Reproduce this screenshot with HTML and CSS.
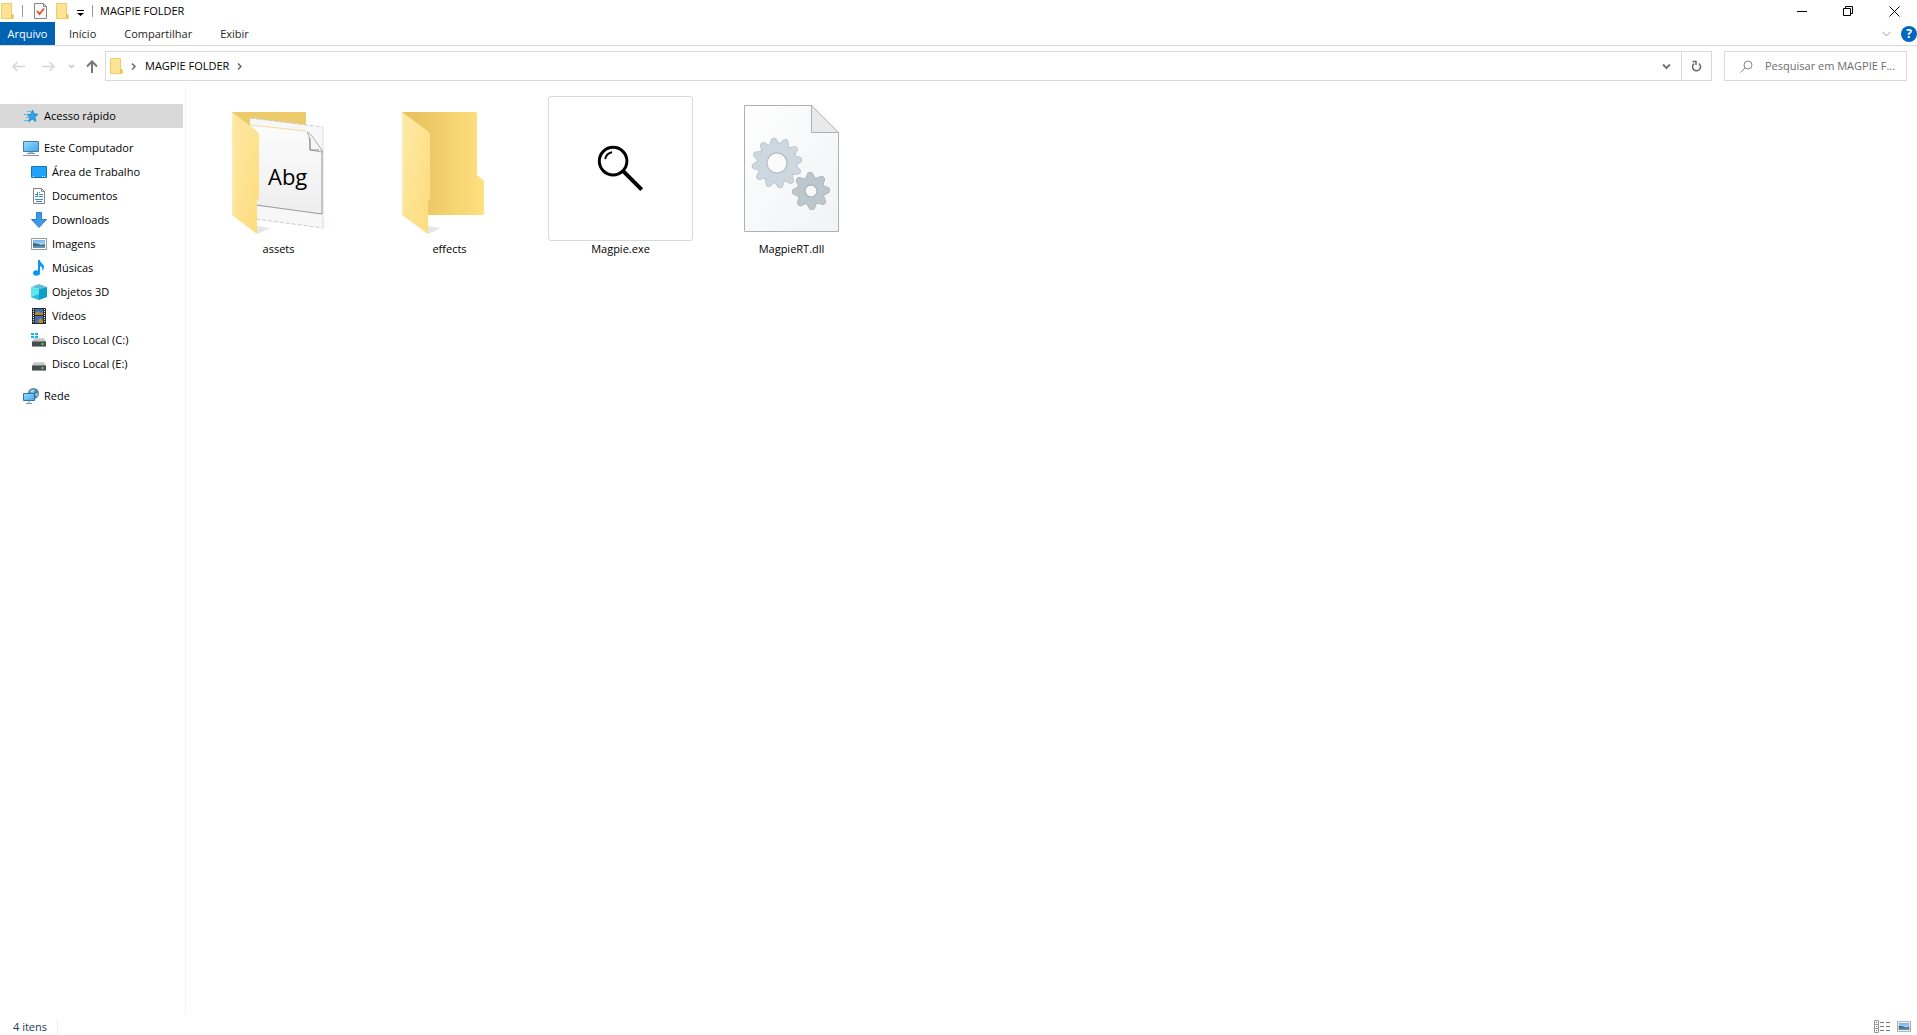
FILE: index.html
```
<!DOCTYPE html>
<html lang="pt-BR">
<head>
  <meta charset="UTF-8">
  <meta name="viewport" content="width=device-width, initial-scale=1.0">
  <title>MAGPIE FOLDER</title>
  <link rel="stylesheet" href="styles.css">
</head>
<body>
  <svg class="defs" width="0" height="0" aria-hidden="true">
    <defs>
      <linearGradient id="flap" x1="0" y1="0" x2="1" y2="1">
        <stop offset="0" stop-color="#ffe9a6"/>
        <stop offset="1" stop-color="#fddc7c"/>
      </linearGradient>
      <linearGradient id="back" x1="0" y1="0" x2="1" y2="0">
        <stop offset="0.2" stop-color="#e9c561"/>
        <stop offset="1" stop-color="#ffe07f"/>
      </linearGradient>
      <linearGradient id="paper" x1="0" y1="0" x2="1" y2="1">
        <stop offset="0" stop-color="#fefefe"/>
        <stop offset="1" stop-color="#f1f3f5"/>
      </linearGradient>
      <linearGradient id="sheet" x1="0" y1="0" x2="0" y2="1">
        <stop offset="0" stop-color="#fcfcfc"/>
        <stop offset="1" stop-color="#eeeeee"/>
      </linearGradient>
      <linearGradient id="screen" x1="0" y1="0" x2="1" y2="1">
        <stop offset="0" stop-color="#9bdcff"/>
        <stop offset="1" stop-color="#3fa5ec"/>
      </linearGradient>
      <linearGradient id="shadow" x1="0" y1="0" x2="1" y2="0">
        <stop offset="0" stop-color="#e4e4e4"/>
        <stop offset="1" stop-color="#fff"/>
      </linearGradient>
      <linearGradient id="photo-sky" x1="0" y1="0" x2="0" y2="1">
        <stop offset="0" stop-color="#6fb0ef"/>
        <stop offset="1" stop-color="#e2f3fb"/>
      </linearGradient>
      <linearGradient id="drive-top" x1="0" y1="0" x2="0" y2="1">
        <stop offset="0" stop-color="#d6d6d6"/>
        <stop offset="1" stop-color="#b4b6b8"/>
      </linearGradient>
      <symbol id="folder" viewBox="0 0 14 16">
        <path d="M1.500.5h10v10l1.500 1.500v3.500H1.500z" fill="#ffe394" stroke="#f0cc62"/>
        <path d="M11 10.500l2.500 1v4H11z" fill="#ecc44d"/>
      </symbol>
      <symbol id="photo" viewBox="0 0 16 12">
        <path d="M.5.5h15v11H.5z" fill="#fff" stroke="#999"/>
        <path d="M2 2h12v8H2z" fill="url(#photo-sky)"/>
        <path d="M2 5c3 0 6 1 8 2l4-1v4H2z" fill="#3c6f75"/>
        <path d="M2 8.500c4-1 8 0 12-1V10H2z" fill="#5c92b8"/>
      </symbol>
      <symbol id="drive" viewBox="0 0 14 9">
        <path d="M2 0h10l2 4H0z" fill="url(#drive-top)"/>
        <path d="M0 3.500h14V8H0z" fill="#494c4e"/>
        <path d="M0 8h14v1H0z" fill="#9a9c9e"/>
        <path d="M9.500 5h2v2h-2z" fill="#3eea3e"/>
      </symbol>
      <path id="tooth" d="M-5-18L-2-24Q0-26 2-24L5-18z"/>
      <g id="gear-big">
        <circle r="19"/>
        <use href="#tooth"/>
        <use href="#tooth" transform="rotate(30)"/>
        <use href="#tooth" transform="rotate(60)"/>
        <use href="#tooth" transform="rotate(90)"/>
        <use href="#tooth" transform="rotate(120)"/>
        <use href="#tooth" transform="rotate(150)"/>
        <use href="#tooth" transform="rotate(180)"/>
        <use href="#tooth" transform="rotate(210)"/>
        <use href="#tooth" transform="rotate(240)"/>
        <use href="#tooth" transform="rotate(270)"/>
        <use href="#tooth" transform="rotate(300)"/>
        <use href="#tooth" transform="rotate(330)"/>
      </g>
      <path id="tooth-small" d="M-5-12L-2-18Q0-19 2-18L5-12z"/>
      <g id="gear-small">
        <circle r="13"/>
        <use href="#tooth-small"/>
        <use href="#tooth-small" transform="rotate(45)"/>
        <use href="#tooth-small" transform="rotate(90)"/>
        <use href="#tooth-small" transform="rotate(135)"/>
        <use href="#tooth-small" transform="rotate(180)"/>
        <use href="#tooth-small" transform="rotate(225)"/>
        <use href="#tooth-small" transform="rotate(270)"/>
        <use href="#tooth-small" transform="rotate(315)"/>
      </g>
    </defs>
  </svg>

  <div class="window">
    <header class="title-bar">
      <svg width="14" height="16"><use href="#folder"/></svg>
      <span class="divider"></span>
      <button class="quick-button" aria-label="Propriedades">
        <svg width="13" height="16" viewBox="0 0 13 16">
          <path d="M.5.5h9l3 3v12H.5z" fill="#f7f7f7" stroke="#888"/>
          <path d="M9.500.5v3h3" fill="none" stroke="#888"/>
          <path d="M3 8l2.500 3L10 5.500" fill="none" stroke="#e8501e" stroke-width="1.800"/>
        </svg>
      </button>
      <button class="quick-button" aria-label="Nova pasta">
        <svg width="14" height="16"><use href="#folder"/></svg>
      </button>
      <button class="quick-button more" aria-label="Personalizar">
        <svg width="7" height="6" viewBox="0 0 7 6"><path d="M0 0h7v1H0zM0 3h7L3.500 6z"/></svg>
      </button>
      <span class="divider"></span>
      <h1>MAGPIE FOLDER</h1>
      <div class="window-buttons">
        <button aria-label="Minimizar">
          <svg width="11" height="11" viewBox="0 0 11 11"><path d="M0 5.500h10" stroke="#000"/></svg>
        </button>
        <button aria-label="Restaurar">
          <svg width="11" height="11" viewBox="0 0 11 11"><path d="M.5 2.500h7v7h-7zM2.500 2.500v-2h7v7h-2" fill="none" stroke="#000"/></svg>
        </button>
        <button aria-label="Fechar">
          <svg width="11" height="11" viewBox="0 0 11 11"><path d="M.5.5l10 10M10.500.5l-10 10" stroke="#000"/></svg>
        </button>
      </div>
    </header>

    <nav class="ribbon">
      <button class="tab file">Arquivo</button>
      <button class="tab">Início</button>
      <button class="tab">Compartilhar</button>
      <button class="tab">Exibir</button>
      <div class="ribbon-right">
        <button aria-label="Expandir">
          <svg width="9" height="6" viewBox="0 0 9 6"><path d="M.5.8l4 4 4-4" fill="none" stroke="#999"/></svg>
        </button>
        <button class="help" aria-label="Ajuda">?</button>
      </div>
    </nav>

    <div class="toolbar">
      <button class="arrow" aria-label="Voltar">
        <svg width="13" height="11" viewBox="0 0 13 11"><path d="M13 5.500H1M5.500 1L1 5.500 5.500 10" fill="none" stroke="#d5d5d5" stroke-width="1.500"/></svg>
      </button>
      <button class="arrow" aria-label="Avançar">
        <svg width="13" height="11" viewBox="0 0 13 11"><path d="M0 5.500h12M7.500 1L12 5.500 7.500 10" fill="none" stroke="#d5d5d5" stroke-width="1.500"/></svg>
      </button>
      <button class="recent" aria-label="Locais recentes">
        <svg width="7" height="5" viewBox="0 0 7 5"><path d="M1 1l2.500 2.500L6 1" fill="none" stroke="#c8c8c8" stroke-width="1.500"/></svg>
      </button>
      <button class="up" aria-label="Acima">
        <svg width="12" height="13" viewBox="0 0 12 13"><path d="M6 13V1.500M1 6.500l5-5 5 5" fill="none" stroke="#777" stroke-width="2"/></svg>
      </button>
      <div class="address">
        <svg width="14" height="16"><use href="#folder"/></svg>
        <svg class="crumb-arrow" width="5" height="7" viewBox="0 0 5 7"><path d="M1 .5l3 3-3 3" fill="none" stroke="#666" stroke-width="1.500"/></svg>
        <a href="#">MAGPIE FOLDER</a>
        <svg class="crumb-arrow" width="5" height="7" viewBox="0 0 5 7"><path d="M1 .5l3 3-3 3" fill="none" stroke="#666" stroke-width="1.500"/></svg>
        <button class="history" aria-label="Locais anteriores">
          <svg width="9" height="7" viewBox="0 0 9 7"><path d="M1 1.500L4.500 5 8 1.500" fill="none" stroke="#777" stroke-width="2"/></svg>
        </button>
        <button class="refresh" aria-label="Atualizar">
          <svg width="11" height="12" viewBox="0 0 11 12"><path d="M7.800 3.500A4 4 0 1 1 3 3.700M1.500 1.500h3.500V5" fill="none" stroke="#666" stroke-width="1.500"/></svg>
        </button>
      </div>
      <label class="search">
        <svg width="13" height="13" viewBox="0 0 13 13"><circle cx="8" cy="5" r="4" fill="none" stroke="#888"/><path d="M5 8L.5 12.500" stroke="#888"/></svg>
        <input type="text" aria-label="Pesquisar" placeholder="Pesquisar em MAGPIE F...">
      </label>
    </div>

    <div class="content">
      <nav class="sidebar">
        <a class="item selected" href="#">
          <svg width="16" height="16" viewBox="0 0 16 16">
            <path d="M9.500 2l1.400 3.800 4 .4-3 2.800.9 4.500-3.600-2.400-3.600 2.600 1.400-4.400L4 6.500l4-.3z" fill="#2fa4ee" stroke="#1583cc" stroke-width=".8"/>
            <path d="M4 3.500h4M1 6.500h4M3 9.500h3M1 12.500h4" stroke="#5ab6ee"/>
          </svg>
          Acesso rápido
        </a>
        <a class="item group" href="#">
          <svg width="16" height="16" viewBox="0 0 16 16">
            <path d="M.5 1.500h15v10H.5z" fill="url(#screen)" stroke="#477b9f"/>
            <path d="M6 12h4v1H6z" fill="#aab6bd"/>
            <path d="M4 13.500h8M0 15.500h16" stroke="#8096a4"/>
          </svg>
          Este Computador
        </a>
        <a class="item child" href="#">
          <svg width="16" height="16" viewBox="0 0 16 16">
            <path d="M.5 2.500h15v11H.5z" fill="#1fa2fb" stroke="#1175b8"/>
            <path d="M2 12.500h1M11 12.500h1M13 12.500h1" stroke="#fff"/>
          </svg>
          Área de Trabalho
        </a>
        <a class="item child" href="#">
          <svg width="16" height="16" viewBox="0 0 16 16">
            <path d="M2.500.5h8l3 3v12h-11z" fill="#fff" stroke="#858585"/>
            <path d="M10.500.5v3h3" fill="none" stroke="#858585"/>
            <path d="M4 6.500h2M8 4.500h1M8 6.500h4M4 8.500h2M8 8.500h4M4 11.500h8M5 13.500h6M6.500 4v5" stroke="#398ac5"/>
          </svg>
          Documentos
        </a>
        <a class="item child" href="#">
          <svg width="16" height="16" viewBox="0 0 16 16"><path d="M5.500.5h5v7h5L8 15.500.5 7.500h5z" fill="#3d98e8" stroke="#2b7fce"/></svg>
          Downloads
        </a>
        <a class="item child" href="#">
          <svg width="16" height="12"><use href="#photo"/></svg>
          Imagens
        </a>
        <a class="item child" href="#">
          <svg width="16" height="16" viewBox="0 0 16 16">
            <path d="M7 0h2c0 3 4 4 4 7 0 2-1 3-2 4 1-3 0-4-2-5v7H7z" fill="#0d97f7"/>
            <ellipse cx="5.500" cy="13" rx="3.500" ry="2.800" fill="#0d97f7"/>
          </svg>
          Músicas
        </a>
        <a class="item child" href="#">
          <svg width="16" height="16" viewBox="0 0 16 16">
            <path d="M0 3l8-3 8 3-8 2z" fill="#5bc0d2"/>
            <path d="M0 3l8 2v11l-8-3z" fill="#5fe5ef"/>
            <path d="M16 3L8 5v11l8-3z" fill="#0b9fc9"/>
            <path d="M0 13l8-3v6z" fill="#2cbad5"/>
          </svg>
          Objetos 3D
        </a>
        <a class="item child" href="#">
          <svg width="16" height="16" viewBox="0 0 16 16">
            <path d="M1 0h14v16H1z" fill="#2d2d2d"/>
            <path d="M4 1h8v6H4zM4 8h8v7H4z" fill="#3e6fbe"/>
            <path d="M4 5l3-2 2 2 3-1v3H4zM7 12l3-2 2 3v2H8z" fill="#b08c35"/>
            <path d="M2.500 1v14M13.500 1v14" stroke="#eee" stroke-dasharray="1 1"/>
          </svg>
          Vídeos
        </a>
        <a class="item child" href="#">
          <svg width="16" height="16" viewBox="0 0 16 16">
            <use href="#drive" x="1" y="6" width="14" height="9"/>
            <path d="M0 1h3v2H0zM4 1h3v2H4zM0 4h3v2H0zM4 4h3v2H4z" fill="#10b5ee"/>
          </svg>
          Disco Local (C:)
        </a>
        <a class="item child" href="#">
          <svg width="16" height="16" viewBox="0 0 16 16"><use href="#drive" x="1" y="6" width="14" height="9"/></svg>
          Disco Local (E:)
        </a>
        <a class="item group" href="#">
          <svg width="16" height="16" viewBox="0 0 16 16">
            <circle cx="10.500" cy="5.500" r="5.500" fill="#4d87a8"/>
            <path d="M7 4c1-3 4-3 5-2l-2 3zM12 6l3-1-1 4z" fill="#a9d3e6"/>
            <path d="M.5 5.500h11v7H.5z" fill="url(#screen)" stroke="#2f76a5"/>
            <path d="M3 15.500h6M6 13v2" stroke="#7c97a8"/>
          </svg>
          Rede
        </a>
      </nav>

      <main class="files">
        <a class="file" href="#">
          <svg width="145" height="145" viewBox="0 0 145 145">
            <path d="M51 138l14-6-14-2zM116 133l16-6-16-3z" fill="url(#shadow)"/>
            <path d="M26 16h74v80H26z" fill="#edcb6a"/>
            <path d="M44 22l73 9v101l-73-9z" fill="#f7f7f7"/>
            <path d="M44 22l73 9M50 123l67 9" fill="none" stroke="#ccc" stroke-dasharray="4 2"/>
            <path d="M117 31v101" stroke="#ddd"/>
            <path d="M44 30l57 6q3 1 5 4l10 14v64l-72-9z" fill="url(#sheet)"/>
            <path d="M44 29l56 6" stroke="#f4dc9d"/>
            <path d="M116 54v64l-66-9" fill="none" stroke="#999"/>
            <path d="M101 36q3 3 3 18l12 2-1-3-9-13q-2-3-5-4z" fill="#f6f6f6" stroke="#aaa"/>
            <path d="M104 42v12h9" fill="none" stroke="#888"/>
            <text class="sheet-text" x="62" y="89">Abg</text>
            <path d="M26 16l26 20q1 1 1 3v63l-2 3v33l-25-19z" fill="url(#flap)"/>
            <path d="M27 18v100" stroke="#ffeebc"/>
          </svg>
          <span>assets</span>
        </a>
        <a class="file" href="#">
          <svg width="145" height="145" viewBox="0 0 145 145">
            <path d="M51 138l13-6-13-2zM107 119l12-5-12-2z" fill="url(#shadow)"/>
            <path d="M25 16h73q2 0 2 2v61l7 6v32q0 2-2 2H51z" fill="url(#back)"/>
            <path d="M25 16l27 20q1 1 1 3v63l-2 3v33l-26-19z" fill="url(#flap)"/>
            <path d="M26 18v100" stroke="#ffeebc"/>
          </svg>
          <span>effects</span>
        </a>
        <a class="file" href="#">
          <svg class="framed" width="145" height="145" viewBox="0 0 145 145">
            <circle cx="65" cy="65" r="14" fill="none" stroke="#000" stroke-width="3"/>
            <path d="M57 63q1-6 7-7" fill="none" stroke="#000" stroke-width="2"/>
            <path d="M75 75l19 19" stroke="#000" stroke-width="4"/>
          </svg>
          <span>Magpie.exe</span>
        </a>
        <a class="file" href="#">
          <svg width="145" height="145" viewBox="0 0 145 145">
            <path d="M25.500 9.500h67l27 27v99h-94z" fill="url(#paper)" stroke="#aeb0b1"/>
            <path d="M92.500 9.500v27h27z" fill="#e9e9e9" stroke="#aeb0b1"/>
            <g transform="translate(58 67) rotate(-8)">
              <use href="#gear-big" fill="#a9b6bf" stroke="#a9b6bf"/>
              <use href="#gear-big" fill="#cdd7df"/>
              <circle r="10" fill="#fbfbfc" stroke="#a9b6bf"/>
            </g>
            <g transform="translate(92 95) rotate(-3)">
              <use href="#gear-small" fill="#9faab1" stroke="#9faab1"/>
              <use href="#gear-small" fill="#bcc6cc"/>
              <circle r="6" fill="#f7f8f9" stroke="#9faab1"/>
            </g>
          </svg>
          <span>MagpieRT.dll</span>
        </a>
      </main>
    </div>

    <footer class="status-bar">
      <span class="count">4 itens</span>
      <div class="view-buttons">
        <button aria-label="Detalhes">
          <svg width="17" height="13" viewBox="0 0 17 13">
            <path d="M.5.5h4v12h-4zM.5 4.500h4M.5 8.500h4" fill="none" stroke="#999"/>
            <path d="M6 2.500h4M12 2.500h4M6 6.500h4M12 6.500h4M6 10.500h4M12 10.500h4" stroke="#777"/>
            <path d="M2 2h1v1H2z" fill="#287a55"/><path d="M2 6h1v1H2z" fill="#2d8cf0"/><path d="M2 10h1v1H2z" fill="#d22"/>
          </svg>
        </button>
        <button aria-label="Ícones grandes">
          <svg width="14" height="11"><use href="#photo"/></svg>
        </button>
      </div>
    </footer>
  </div>
</body>
</html>
```
FILE: styles.css
```
* {
  box-sizing: border-box;
}

body {
  margin: 0;
  font-family: "Open Sans", "Noto Sans", sans-serif;
  font-size: 11px;
  line-height: 16px;
  color: #000;
  background-color: #fff;
}

button {
  display: flex;
  align-items: center;
  justify-content: center;
  padding: 0;
  border: none;
  background: none;
  font: inherit;
  color: inherit;
}

a {
  color: inherit;
  text-decoration: none;
}

svg {
  display: block;
  flex-shrink: 0;
}

.defs {
  position: absolute;
}

.window {
  display: flex;
  flex-direction: column;
  min-height: 100vh;
}

/* Title bar */
.title-bar {
  display: flex;
  align-items: center;
  height: 22px;
}

.title-bar h1 {
  margin: 0 0 0 7px;
  font-size: 11px;
  font-weight: normal;
}

.divider {
  width: 1px;
  height: 12px;
  margin: 0 6px 0 8px;
  background-color: #999;
}

.title-bar .divider:last-of-type {
  margin: 0 0 0 4px;
}

.quick-button {
  width: 22px;
  height: 22px;
}

.quick-button.more {
  width: 15px;
  padding-top: 4px;
}

.window-buttons {
  display: flex;
  margin-left: auto;
}

.window-buttons button {
  width: 46px;
  height: 20px;
}

/* Ribbon */
.ribbon {
  display: flex;
  height: 24px;
  border-bottom: 1px solid #dadbdc;
}

.tab {
  padding: 0 14px;
  color: #262626;
}

.tab.file {
  width: 55px;
  padding: 0;
  color: #fff;
  background-color: #0063b1;
}

.ribbon-right {
  display: flex;
  align-items: center;
  gap: 10px;
  margin-left: auto;
}

.help {
  width: 16px;
  height: 16px;
  border-radius: 50%;
  font-size: 12px;
  font-weight: bold;
  color: #fff;
  background-color: #0067c0;
}

/* Toolbar */
.toolbar {
  display: flex;
  align-items: center;
  height: 40px;
  padding-right: 10px;
  padding-left: 3px;
}

.toolbar .arrow {
  width: 30px;
  height: 30px;
}

.toolbar .recent {
  width: 16px;
  height: 30px;
}

.toolbar .up {
  width: 26px;
  height: 30px;
}

.address {
  display: flex;
  flex: 1;
  align-items: center;
  height: 30px;
  padding-left: 3px;
  border: 1px solid #d9d9d9;
}

.crumb-arrow {
  margin: 0 9px 0 8px;
}

.history {
  width: 30px;
  height: 28px;
  margin-left: auto;
}

.refresh {
  width: 30px;
  height: 28px;
  border-left: 1px solid #d9d9d9;
}

.search {
  display: flex;
  align-items: center;
  gap: 12px;
  width: 183px;
  height: 30px;
  margin-left: 12px;
  padding-left: 15px;
  border: 1px solid #d9d9d9;
}

.search input {
  flex: 1;
  min-width: 0;
  padding: 0;
  border: none;
  outline: none;
  font: inherit;
  background: none;
}

.search input::placeholder {
  color: #6d6d6d;
}

/* Sidebar and files */
.content {
  display: flex;
  flex: 1;
}

.sidebar {
  width: 186px;
  padding: 18px 2px 0 0;
  border-right: 1px solid #f3f3f3;
}

.item {
  display: flex;
  align-items: center;
  gap: 5px;
  height: 24px;
  padding-left: 23px;
}

.item.selected {
  background-color: #d9d9d9;
}

.item.group {
  margin-top: 8px;
}

.item.child {
  padding-left: 31px;
}

.files {
  display: flex;
  flex: 1;
  flex-wrap: wrap;
  align-content: flex-start;
  gap: 26px;
  padding: 10px 20px;
}

.files .file {
  width: 145px;
  text-align: center;
}

.files .file span {
  display: block;
}

.framed {
  border: 1px solid #d9d9d9;
  border-radius: 3px;
}

.sheet-text {
  font-size: 22px;
}

/* Status bar */
.status-bar {
  display: flex;
  align-items: flex-end;
  height: 20px;
  padding-right: 6px;
  color: #1e395b;
}

.count {
  width: 58px;
  padding-left: 13px;
  border-right: 1px solid #f0f0f0;
}

.view-buttons {
  display: flex;
  gap: 6px;
  margin-left: auto;
  padding-bottom: 2px;
}
```
